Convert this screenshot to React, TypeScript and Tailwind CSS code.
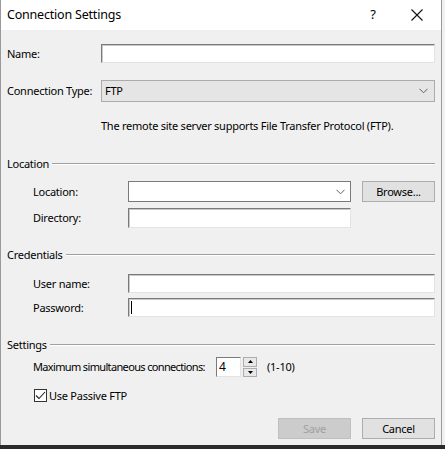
import React from "react";

const font = { fontFamily: '"Segoe UI", "Noto Sans", sans-serif' };

function TextBox({ w, h = 19, cursor = false }: { w: number; h?: number; cursor?: boolean }) {
  return (
    <div
      className="bg-white border border-t-[#7a7a7a] border-l-[#7a7a7a] border-r-[#e3e3e3] border-b-[#e3e3e3] shadow-[inset_1px_1px_0_#c9c9c9] flex items-center shrink-0"
      style={{ width: w, height: h }}
    >
      {cursor && <div className="ml-[2px] w-px h-[13px] bg-black" />}
    </div>
  );
}

function Chevron() {
  return (
    <svg width="9" height="6" viewBox="0 0 9 6" className="shrink-0">
      <path d="M0.5 0.8 L4.5 4.8 L8.5 0.8" fill="none" stroke="#606060" strokeWidth="1" />
    </svg>
  );
}

function Group({ title }: { title: string }) {
  return (
    <div className="flex items-center h-[16px] pr-[6px]">
      <span className="leading-[16px]">{title}</span>
      <div className="flex-1 ml-[3px] h-[2px] border-t border-t-[#a0a0a0] border-b border-b-white" />
    </div>
  );
}

export default function App() {
  return (
    <div className="w-[445px] h-[449px] bg-[#f0f0f0] relative overflow-hidden" style={font}>
      <div className="w-[442px] h-[445px] border-l border-r border-[#9a9a9a] flex flex-col bg-[#f0f0f0]">
        {/* title bar */}
        <div className="h-[30px] bg-white flex items-center shrink-0">
          <span className="pl-[6px] text-[12.5px] text-black tracking-[-0.2px]">Connection Settings</span>
          <div className="flex-1" />
          <span className="text-[13px] text-black mr-[35px]">?</span>
          <svg width="12" height="12" viewBox="0 0 12 12" className="mr-[18px]">
            <path d="M0.5 0.5 L11.5 11.5 M11.5 0.5 L0.5 11.5" stroke="#111" strokeWidth="1.1" />
          </svg>
        </div>

        <div className="flex flex-col pl-[6px] text-[11px] tracking-[-0.25px] text-black leading-[16px] whitespace-nowrap">
          {/* Name */}
          <div className="flex items-center mt-[14px] h-[19px]">
            <span className="w-[94px] shrink-0">Name:</span>
            <TextBox w={334} />
          </div>
          {/* Connection type */}
          <div className="flex items-center mt-[17px] h-[22px]">
            <span className="w-[94px] shrink-0">Connection Type:</span>
            <div className="w-[334px] h-[22px] shrink-0 bg-[#e5e5e5] border border-[#acacac] flex items-center pl-[3px] pr-[6px]">
              <span className="flex-1">FTP</span>
              <Chevron />
            </div>
          </div>
          <div className="mt-[16px] pl-[94px] h-[16px]">
            The remote site server supports File Transfer Protocol (FTP).
          </div>

          {/* Location */}
          <div className="mt-[22px]">
            <Group title="Location" />
          </div>
          <div className="flex items-center mt-[9px] pl-[26px] h-[21px]">
            <span className="w-[95px] shrink-0">Location:</span>
            <div className="w-[223px] h-[21px] shrink-0 bg-white border border-[#7a7a7a] flex items-center justify-end pr-[5px]">
              <Chevron />
            </div>
            <div className="ml-[11px] w-[73px] h-[21px] shrink-0 bg-[#e1e1e1] border border-[#adadad] flex items-center justify-center">
              Browse...
            </div>
          </div>
          <div className="flex items-center mt-[6px] pl-[26px] h-[20px]">
            <span className="w-[95px] shrink-0">Directory:</span>
            <TextBox w={223} h={20} />
          </div>

          {/* Credentials */}
          <div className="mt-[19px]">
            <Group title="Credentials" />
          </div>
          <div className="flex items-center mt-[11px] pl-[26px] h-[19px]">
            <span className="w-[95px] shrink-0">User name:</span>
            <TextBox w={307} />
          </div>
          <div className="flex items-center mt-[5px] pl-[26px] h-[19px]">
            <span className="w-[95px] shrink-0">Password:</span>
            <TextBox w={307} cursor />
          </div>

          {/* Settings */}
          <div className="mt-[20px]">
            <Group title="Settings" />
          </div>
          <div className="flex items-center mt-[4px] pl-[26px] h-[20px]">
            <span className="w-[183px] shrink-0 tracking-[-0.65px]">Maximum simultaneous connections:</span>
            <div className="w-[25px] h-[20px] shrink-0 bg-white border border-t-[#7a7a7a] border-l-[#7a7a7a] border-r-[#e3e3e3] border-b-[#e3e3e3] flex items-center pl-[2px] text-[12px]">
              4
            </div>
            <div className="ml-[2px] w-[14px] h-[20px] shrink-0 flex flex-col gap-[1px]">
              <div className="flex-1 bg-[#e8e8e8] border border-[#adadad] flex items-center justify-center">
                <svg width="5" height="3" viewBox="0 0 5 3"><path d="M2.5 0 L5 3 L0 3 Z" fill="#000" /></svg>
              </div>
              <div className="flex-1 bg-[#e8e8e8] border border-[#adadad] flex items-center justify-center">
                <svg width="5" height="3" viewBox="0 0 5 3"><path d="M0 0 L5 0 L2.5 3 Z" fill="#000" /></svg>
              </div>
            </div>
            <span className="ml-[10px]">(1-10)</span>
          </div>
          <div className="flex items-center mt-[12px] pl-[27px] h-[13px]">
            <div className="w-[13px] h-[13px] shrink-0 bg-white border border-[#333] flex items-center justify-center">
              <svg width="11" height="9" viewBox="0 0 11 9">
                <path d="M1 4.5 L4 7.5 L10 1" fill="none" stroke="#222" strokeWidth="1.1" />
              </svg>
            </div>
            <span className="ml-[2px]">Use Passive FTP</span>
          </div>

          {/* Buttons */}
          <div className="flex justify-end mt-[16px] pr-[6px] gap-[11px]">
            <div className="w-[73px] h-[21px] bg-[#cccccc] border border-[#bfbfbf] flex items-center justify-center text-[#a0a0a0]">
              Save
            </div>
            <div className="w-[73px] h-[21px] bg-[#e1e1e1] border border-[#adadad] flex items-center justify-center">
              Cancel
            </div>
          </div>
        </div>
      </div>
      <div className="absolute left-0 right-0 bottom-0 h-[4px] bg-[#2b2b2b]" />
    </div>
  );
}
